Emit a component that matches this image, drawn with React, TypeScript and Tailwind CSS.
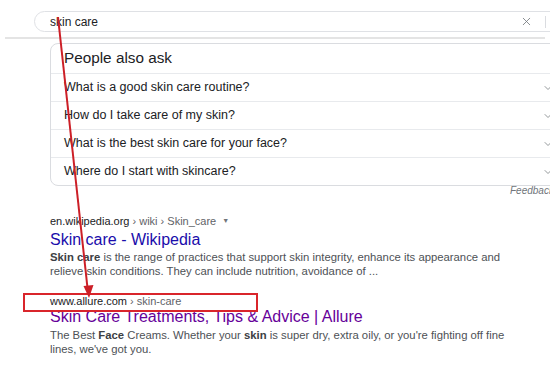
import { X, ChevronDown } from "lucide-react";

const questions = [
  "What is a good skin care routine?",
  "How do I take care of my skin?",
  "What is the best skin care for your face?",
  "Where do I start with skincare?",
];

export default function App() {
  return (
    <div
      className="relative h-[370px] w-[550px] overflow-hidden bg-white text-[#202124]"
      style={{ fontFamily: '"Liberation Sans", Arial, sans-serif' }}
    >
      {/* search header */}
      <div className="pt-[11px]">
        <div className="ml-[34px] flex h-[21px] w-[560px] items-center rounded-full border border-[#dfe1e5] pl-[15px]">
          <span className="text-[12px] leading-none">skin care</span>
          <X className="ml-[422px] h-[13px] w-[13px] text-[#70757a]" strokeWidth={1.5} />
          <span className="ml-[12px] h-[12px] w-px bg-[#dadce0]" />
        </div>
        <div className="ml-[5px] mt-[5px] h-[2px] w-[540px] bg-[#e4e4e4]" />
      </div>

      {/* people also ask */}
      <div className="ml-[50px] mt-[4px] w-[520px] rounded-lg border border-[#dadce0]">
        <div className="flex h-[29px] items-center pl-[13px] text-[15.3px]">People also ask</div>
        {questions.map((q) => (
          <div
            key={q}
            className="flex h-[28px] items-center border-t border-[#e8eaed] pl-[13px] text-[12.5px]"
          >
            <span className="w-[478px]">{q}</span>
            <ChevronDown className="h-[12px] w-[12px] text-[#70757a]" strokeWidth={1.5} />
          </div>
        ))}
      </div>
      <div className="-mt-px ml-[510px] whitespace-nowrap text-[10px] italic leading-[12px] text-[#70757a]">
        Feedback
      </div>

      {/* results */}
      <div className="ml-[50px] mt-[17px] w-[480px]">
        <div className="flex h-[14px] items-center text-[11px] leading-[14px]">
          <span className="text-[#202124]">en.wikipedia.org</span>
          <span className="ml-[3px] text-[#5f6368]">› wiki › Skin_care</span>
          <span className="ml-[6px] text-[7px] text-[#70757a]">▼</span>
        </div>
        <div className="mt-[3px] text-[16px] leading-[18px] text-[#1a0dab]">Skin care - Wikipedia</div>
        <p className="mt-px whitespace-nowrap text-[11.3px] leading-[14px] text-[#4d5156]">
          <b className="text-[#3c4043]">Skin care</b> is the range of practices that support skin integrity, enhance its appearance and
          <br />
          relieve skin conditions. They can include nutrition, avoidance of ...
        </p>

        <div className="mt-[16px] flex h-[14px] items-center text-[11px] leading-[14px]">
          <span className="text-[#202124]">www.allure.com</span>
          <span className="ml-[3px] text-[#5f6368]">› skin-care</span>
        </div>
        <div className="text-[16px] leading-[18px] text-[#660099]">
          Skin Care Treatments, Tips &amp; Advice | Allure
        </div>
        <p className="mt-[2px] whitespace-nowrap text-[11.3px] leading-[14px] text-[#4d5156]">
          The Best <b className="text-[#3c4043]">Face</b> Creams. Whether your <b className="text-[#3c4043]">skin</b> is super dry, extra oily, or you're fighting off fine
          <br />
          lines, we've got you.
        </p>
      </div>

      {/* annotation overlay */}
      <div className="absolute left-[23px] top-[293px] h-[19px] w-[235px] border-2 border-[#d9252b]" />
      <svg className="pointer-events-none absolute left-0 top-0" width="550" height="370">
        <line x1="58" y1="17" x2="87.5" y2="288" stroke="#cc1f27" strokeWidth="2" />
        <polygon points="89,298 83.5,286 93.5,285" fill="#cc1f27" />
      </svg>
    </div>
  );
}
